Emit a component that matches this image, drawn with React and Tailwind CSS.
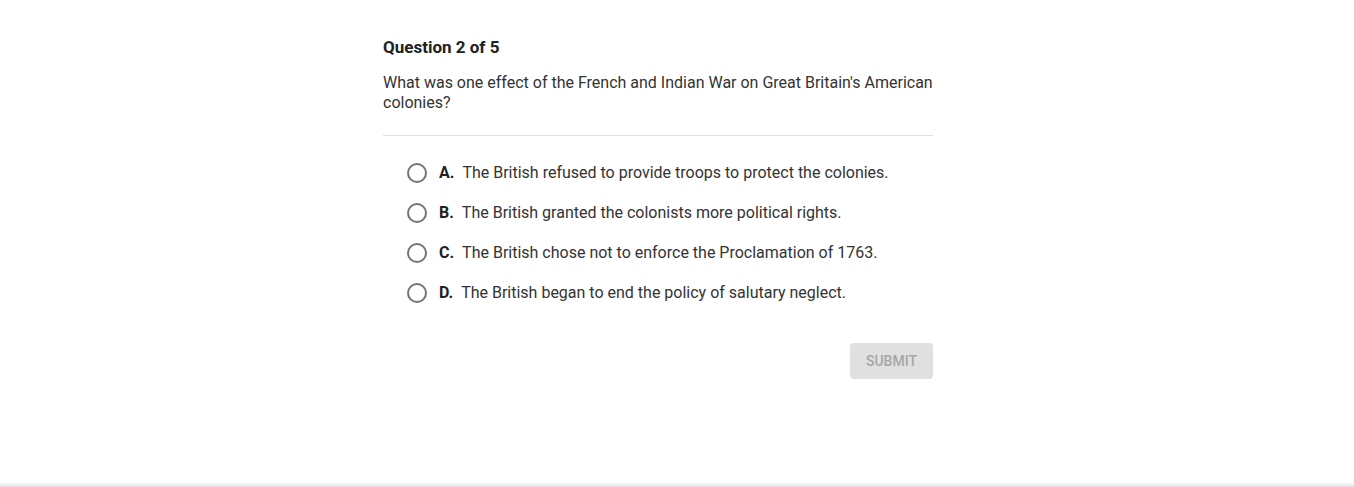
const options = [
    { letter: 'A.', text: 'The British refused to provide troops to protect the colonies.' },
    { letter: 'B.', text: 'The British granted the colonists more political rights.' },
    { letter: 'C.', text: 'The British chose not to enforce the Proclamation of 1763.' },
    { letter: 'D.', text: 'The British began to end the policy of salutary neglect.' },
];

const App = () => {
    return (
        <div className="flex h-screen flex-col bg-white font-['Roboto',sans-serif] text-[#212121]">
            <div className="flex-1">
                <div className="ml-[383px] w-[550px] pt-[36px]">
                    <h1 className="text-[17px] font-bold leading-[22px]">Question 2 of 5</h1>
                    <p className="mt-[15px] text-[16px] leading-[20px] text-[#333]">
                        What was one effect of the French and Indian War on Great Britain's American colonies?
                    </p>
                    <div className="mt-[22px] h-px bg-[#e0e0e0]"></div>

                    <div className="mt-[17px] flex flex-col pl-[24px]">
                        {options.map((o) => (
                            <label key={o.letter} className="flex h-10 items-center gap-3 text-[16px]">
                                <span className="h-[20px] w-[20px] rounded-full border-2 border-[#737373]"></span>
                                <span className="flex gap-2">
                                    <span className="font-bold">{o.letter}</span>
                                    <span className="text-[#333]">{o.text}</span>
                                </span>
                            </label>
                        ))}
                    </div>

                    <div className="mt-[30px] flex justify-end">
                        <button className="h-9 rounded bg-[#e0e0e0] px-4 text-[14px] font-medium uppercase text-[#a6a6a6]">
                            Submit
                        </button>
                    </div>
                </div>
            </div>
            <div className="h-[5px] bg-gradient-to-b from-white to-[#e2e2e2]"></div>
        </div>
    );
};

export default App;
